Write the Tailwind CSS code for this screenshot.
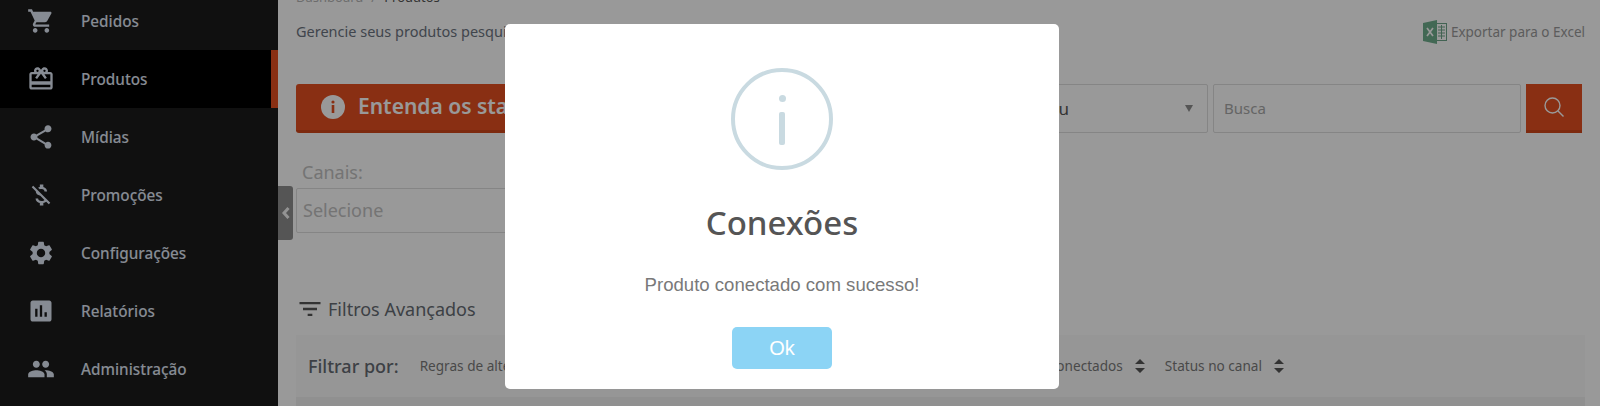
<!DOCTYPE html>
<html lang="pt-BR">
<head>
    <meta charset="UTF-8">
    <title>Produtos</title>
    <script src="https://cdn.jsdelivr.net/npm/@tailwindcss/browser@4"></script>
</head>
<body class="h-[406px] overflow-hidden bg-white font-['Noto_Sans',sans-serif]">
    <div class="flex h-[406px] overflow-hidden">
        <!-- menu lateral -->
        <aside class="w-[278px] shrink-0 bg-[#1c1c1c] text-[#e0e8f6] text-[15.3px] font-medium">
            <ul class="-mt-[8px]">
                <li class="flex h-[58px] items-center pl-[27px]">
                    <svg class="w-[28px] h-[28px] fill-current" viewBox="0 0 24 24"><path d="M7 18c-1.1 0-1.99.9-1.99 2S5.9 22 7 22s2-.9 2-2-.9-2-2-2zM1 2v2h2l3.6 7.59-1.35 2.45c-.16.28-.25.61-.25.96 0 1.1.9 2 2 2h12v-2H7.42c-.14 0-.25-.11-.25-.25l.03-.12.9-1.63h7.45c.75 0 1.41-.41 1.75-1.03l3.58-6.49c.08-.14.12-.31.12-.48 0-.55-.45-1-1-1H5.21l-.94-2H1zm16 16c-1.1 0-1.99.9-1.99 2s.89 2 1.99 2 2-.9 2-2-.9-2-2-2z"/></svg>
                    <span class="ml-[26px] mt-[1px]">Pedidos</span>
                </li>
                <li class="flex h-[58px] items-center pl-[27px] bg-black border-r-[7px] border-[#e54f20]">
                    <svg class="w-[28px] h-[28px] fill-current" viewBox="0 0 24 24"><path d="M20 6h-2.18c.11-.31.18-.65.18-1 0-1.66-1.34-3-3-3-1.05 0-1.96.54-2.5 1.35l-.5.67-.5-.68C10.96 2.54 10.05 2 9 2 7.34 2 6 3.34 6 5c0 .35.07.69.18 1H4c-1.11 0-1.99.89-1.99 2L2 19c0 1.11.89 2 2 2h16c1.11 0 2-.89 2-2V8c0-1.11-.89-2-2-2zm-5-2c.55 0 1 .45 1 1s-.45 1-1 1-1-.45-1-1 .45-1 1-1zM9 4c.55 0 1 .45 1 1s-.45 1-1 1-1-.45-1-1 .45-1 1-1zm11 15H4v-2h16v2zm0-5H4V8h5.08L7 10.83 8.62 12 11 8.76l1-1.36 1 1.36L15.38 12 17 10.83 14.92 8H20v6z"/></svg>
                    <span class="ml-[26px] mt-[1px]">Produtos</span>
                </li>
                <li class="flex h-[58px] items-center pl-[27px]">
                    <svg class="w-[28px] h-[28px] fill-current" viewBox="0 0 24 24"><path d="M18 16.08c-.76 0-1.44.3-1.96.77L8.91 12.7c.05-.23.09-.46.09-.7s-.04-.47-.09-.7l7.05-4.11c.54.5 1.25.81 2.04.81 1.66 0 3-1.34 3-3s-1.34-3-3-3-3 1.34-3 3c0 .24.04.47.09.7L8.04 9.81C7.5 9.31 6.79 9 6 9c-1.66 0-3 1.34-3 3s1.34 3 3 3c.79 0 1.5-.31 2.04-.81l7.12 4.16c-.05.21-.08.43-.08.65 0 1.61 1.31 2.92 2.92 2.92 1.61 0 2.92-1.31 2.92-2.92s-1.31-2.92-2.92-2.92z"/></svg>
                    <span class="ml-[26px] mt-[1px]">Mídias</span>
                </li>
                <li class="flex h-[58px] items-center pl-[27px]">
                    <svg class="w-[28px] h-[28px] fill-current" viewBox="0 0 24 24"><path d="M12.5 6.9c1.78 0 2.44.85 2.5 2.1h2.21c-.07-1.72-1.12-3.3-3.21-3.81V3h-3v2.16c-.53.12-1.03.3-1.48.54l1.47 1.47c.41-.17.91-.27 1.51-.27zM5.33 4.06L4.06 5.33 7.5 8.77c0 2.08 1.56 3.21 3.91 3.91l3.51 3.51c-.34.48-1.05.91-2.42.91-2.06 0-2.87-.92-2.98-2.1h-2.2c.12 2.19 1.76 3.42 3.68 3.83V21h3v-2.15c.96-.18 1.82-.55 2.45-1.12l2.22 2.22 1.27-1.27L5.33 4.06z"/></svg>
                    <span class="ml-[26px] mt-[1px]">Promoções</span>
                </li>
                <li class="flex h-[58px] items-center pl-[27px]">
                    <svg class="w-[28px] h-[28px] fill-current" viewBox="0 0 24 24"><path d="M19.14 12.94c.04-.3.06-.61.06-.94 0-.32-.02-.64-.07-.94l2.03-1.58c.18-.14.23-.41.12-.61l-1.92-3.32c-.12-.22-.37-.29-.59-.22l-2.39.96c-.5-.38-1.03-.7-1.62-.94l-.36-2.54c-.04-.24-.24-.41-.48-.41h-3.84c-.24 0-.43.17-.47.41l-.36 2.54c-.59.24-1.13.57-1.62.94l-2.39-.96c-.22-.08-.47 0-.59.22L2.74 8.87c-.12.21-.08.47.12.61l2.03 1.58c-.05.3-.09.63-.09.94s.02.64.07.94l-2.03 1.58c-.18.14-.23.41-.12.61l1.92 3.32c.12.22.37.29.59.22l2.39-.96c.5.38 1.03.7 1.62.94l.36 2.54c.05.24.24.41.48.41h3.84c.24 0 .44-.17.47-.41l.36-2.54c.59-.24 1.13-.56 1.62-.94l2.39.96c.22.08.47 0 .59-.22l1.92-3.32c.12-.22.07-.47-.12-.61l-2.01-1.58zM12 15.6c-1.98 0-3.6-1.62-3.6-3.6s1.62-3.6 3.6-3.6 3.6 1.62 3.6 3.6-1.62 3.6-3.6 3.6z"/></svg>
                    <span class="ml-[26px] mt-[1px]">Configurações</span>
                </li>
                <li class="flex h-[58px] items-center pl-[27px]">
                    <svg class="w-[28px] h-[28px] fill-current" viewBox="0 0 24 24"><path d="M19 3H5c-1.1 0-2 .9-2 2v14c0 1.1.9 2 2 2h14c1.1 0 2-.9 2-2V5c0-1.1-.9-2-2-2zM9 17H7v-7h2v7zm4 0h-2V7h2v10zm4 0h-2v-4h2v4z"/></svg>
                    <span class="ml-[26px] mt-[1px]">Relatórios</span>
                </li>
                <li class="flex h-[58px] items-center pl-[27px]">
                    <svg class="w-[28px] h-[28px] fill-current" viewBox="0 0 24 24"><path d="M16 11c1.66 0 2.99-1.34 2.99-3S17.66 5 16 5c-1.66 0-3 1.34-3 3s1.34 3 3 3zm-8 0c1.66 0 2.99-1.34 2.99-3S9.66 5 8 5C6.34 5 5 6.34 5 8s1.34 3 3 3zm0 2c-2.33 0-7 1.17-7 3.5V19h14v-2.5c0-2.33-4.67-3.5-7-3.5zm8 0c-.29 0-.62.02-.97.05 1.16.84 1.97 1.97 1.97 3.45V19h6v-2.5c0-2.33-4.67-3.5-7-3.5z"/></svg>
                    <span class="ml-[26px] mt-[1px]">Administração</span>
                </li>
            </ul>
        </aside>

        <!-- aba de recolher o menu -->
        <div class="absolute left-[278px] top-[186px] w-[15px] h-[54px] bg-[#8e8e8e] rounded-r-[3px] flex items-center justify-center">
            <svg class="w-[10px] h-[14px] text-[#f5f5f5]" viewBox="0 0 10 14" fill="none" stroke="currentColor" stroke-width="3"><path d="M7.5 2 L3 7 L7.5 12"/></svg>
        </div>

        <main class="flex-1 min-w-0 pl-[18px] pr-[15px]">
            <div class="-mt-[9px] h-[14px] flex items-center text-[13px] text-[#b5b5b5]">
                <span>Dashboard</span>
                <span class="mx-[8px]">/</span>
                <span class="text-[#555]">Produtos</span>
            </div>

            <div class="mt-[13px] h-[28px] flex items-center justify-between">
                <span class="text-[14.5px] text-[#6c7480]">Gerencie seus produtos pesquisando pelos filtros abaixo</span>
                <div class="flex items-center text-[13.5px] text-[#9a9a9a]">
                    <svg class="w-[24px] h-[24px] mr-[4px]" viewBox="0 0 24 24">
                        <rect x="9" y="3.5" width="14.5" height="17" fill="#fff" stroke="#6fa58a"/>
                        <path d="M15 7h7M15 10h7M15 13h7M15 16h7M18.5 5v14" stroke="#6fa58a" stroke-width="1"/>
                        <path d="M0 3 L14 0 V24 L0 21 Z" fill="#6fae8d"/>
                        <path d="M4 8 L10 16 M10 8 L4 16" stroke="#fff" stroke-width="1.7"/>
                    </svg>
                    <span>Exportar para o Excel</span>
                </div>
            </div>

            <div class="mt-[38px] h-[49px] flex">
                <button class="w-[700px] flex items-center pl-[25px] bg-[#e54f20] border-b-[3px] border-[#d04619] rounded-[3px] text-white text-[21px] font-semibold">
                    <svg class="w-[24px] h-[24px] mr-[13px] fill-current" viewBox="0 0 24 24"><circle cx="12" cy="12" r="12"/><circle cx="12" cy="7" r="1.6" fill="#e54f20"/><rect x="10.7" y="10" width="2.6" height="8" fill="#e54f20"/></svg>
                    Entenda os status
                </button>
                <div class="ml-[14px] w-[198px] flex items-center justify-between pl-[12px] pr-[14px] border border-[#dedede] rounded-[2px] text-[17px] text-[#555]">
                    <span>Menu</span>
                    <span class="w-0 h-0 border-l-[4.5px] border-r-[4.5px] border-t-[7px] border-l-transparent border-r-transparent border-[#8e8e8e]"></span>
                </div>
                <div class="ml-[5px] w-[308px] flex items-center pl-[10px] border border-[#dedede] rounded-[2px] text-[15px] text-[#a8a8a8]">Busca</div>
                <button class="ml-[5px] w-[56px] flex items-center justify-center bg-[#e54f20] border-b-[3px] border-[#d04619] text-white">
                    <svg class="w-[22px] h-[22px]" viewBox="0 0 22 22" fill="none" stroke="currentColor" stroke-width="1.4"><circle cx="9.5" cy="9.5" r="7.5"/><path d="M15 15 L20.5 20.5"/></svg>
                </button>
            </div>

            <div class="mt-[25px] pl-[6px] h-[28px] flex items-center text-[18px] text-[#c2c2c2]">Canais:</div>
            <div class="mt-[2px] w-[520px] h-[45px] flex items-center pl-[6px] border border-[#dedede] rounded-[2px] text-[18px] text-[#c2c2c2]">Selecione</div>

            <div class="mt-[62px] h-[28px] flex items-center pl-[1px] text-[18px] text-[#666c73]">
                <svg class="w-[28px] h-[28px] -ml-[1px] mr-[4px] fill-[#555]" viewBox="0 0 24 24"><path d="M10 18h4v-2h-4v2zM3 6v2h18V6H3zm3 7h12v-2H6v2z"/></svg>
                <span>Filtros Avançados</span>
            </div>

            <div class="mt-[12px] h-[62px] flex items-center pl-[12px] bg-[#fafafa] text-[13.6px] text-[#7a7a7a]">
                <span class="text-[18px] font-medium text-[#666c73] mr-[21px]">Filtrar por:</span>
                <span>Regras de alteração</span>
                <div class="ml-auto mr-[300px] flex items-center">
                    <span>Produtos conectados</span>
                    <svg class="w-[12px] h-[14px] ml-[11px] mr-[19px] fill-[#555]" viewBox="0 0 12 14"><path d="M6 0 L11 5 H1 Z M6 14 L11 9 H1 Z"/></svg>
                    <span>Status no canal</span>
                    <svg class="w-[12px] h-[14px] ml-[11px] fill-[#555]" viewBox="0 0 12 14"><path d="M6 0 L11 5 H1 Z M6 14 L11 9 H1 Z"/></svg>
                </div>
            </div>
            <div class="h-[20px] bg-[#f0f0f0]"></div>
        </main>
    </div>

    <!-- modal de confirmacao -->
    <div class="fixed inset-0 bg-black/40">
        <div class="absolute left-[505px] top-[24px] w-[554px] h-[365px] bg-white rounded-[5px] flex flex-col items-center">
            <div class="mt-[44px] w-[102px] h-[102px] rounded-full border-[4px] border-[#c9dae1] flex flex-col items-center">
                <span class="mt-[23px] w-[7px] h-[7px] rounded-full bg-[#c9dae1]"></span>
                <span class="mt-[10px] w-[6px] h-[33px] rounded-[2px] bg-[#c9dae1]"></span>
            </div>
            <h2 class="mt-[31px] text-[33px] leading-[44px] font-medium text-[#555]">Conexões</h2>
            <p class="mt-[28px] text-[18.6px] leading-[24px] text-[#797979] font-['Liberation_Sans',sans-serif]">Produto conectado com sucesso!</p>
            <button class="mt-[30px] w-[100px] h-[42px] rounded-[5px] bg-[#8cd4f5] text-white text-[20px] font-['Liberation_Sans',sans-serif]">Ok</button>
        </div>
    </div>
</body>
</html>
